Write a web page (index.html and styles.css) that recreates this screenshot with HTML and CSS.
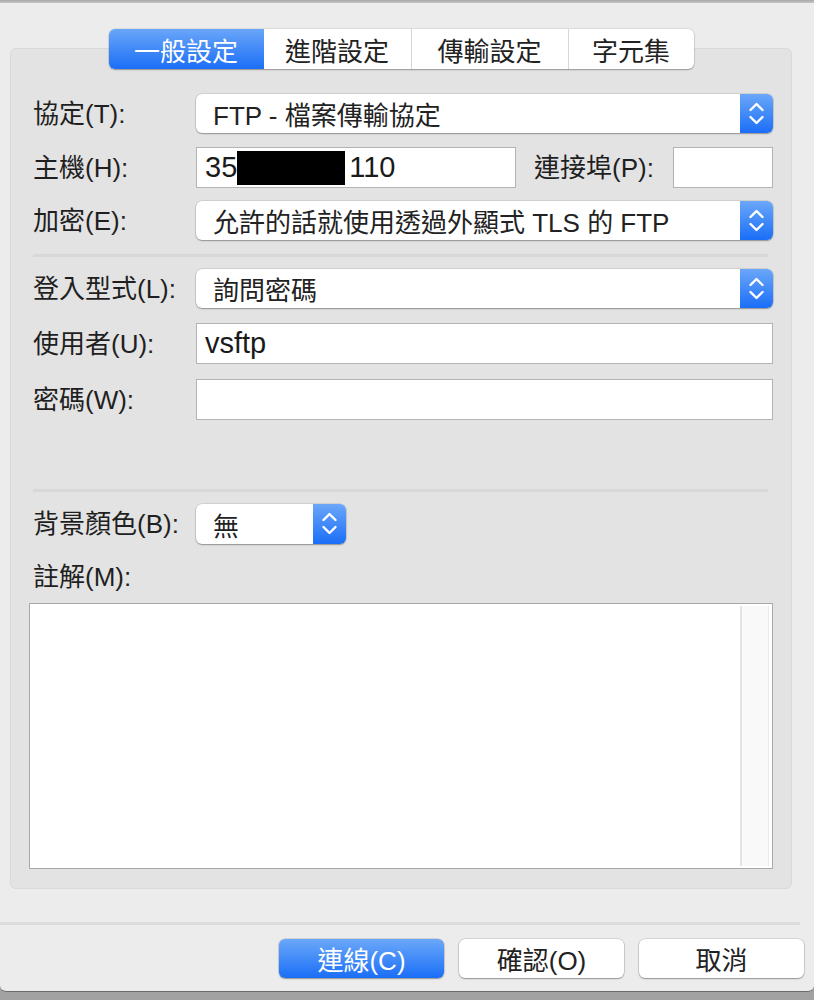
FILE: index.html
```html
<!DOCTYPE html>
<html lang="zh-Hant">
<head>
<meta charset="utf-8">
<title>站台管理員</title>
<link rel="stylesheet" href="styles.css">
</head>
<body>
<div class="topbar"></div>
<div class="window">
  <div class="tabs">
    <div class="tab sel t1">一般設定</div>
    <div class="tab t2">進階設定</div>
    <div class="tab t3">傳輸設定</div>
    <div class="tab t4">字元集</div>
  </div>
  <div class="group">
    <div class="row m14">
      <div class="lbl">協定(T):</div>
      <div class="popup"><span class="val">FTP - 檔案傳輸協定</span><span class="stepper"><svg viewBox="0 0 33 39" width="33" height="39"><polyline points="10.5,16 16.5,10 22.5,16"/><polyline points="10.5,23 16.5,29 22.5,23"/></svg></span></div>
    </div>
    <div class="row m13">
      <div class="lbl">主機(H):</div>
      <div class="hostline">
        <div class="field host">35<span class="redact"></span>110</div>
        <div class="lbl portlbl">連接埠(P):</div>
        <div class="field port"></div>
      </div>
    </div>
    <div class="row m14">
      <div class="lbl">加密(E):</div>
      <div class="popup"><span class="val">允許的話就使用透過外顯式 TLS 的 FTP</span><span class="stepper"><svg viewBox="0 0 33 39" width="33" height="39"><polyline points="10.5,16 16.5,10 22.5,16"/><polyline points="10.5,23 16.5,29 22.5,23"/></svg></span></div>
    </div>
    <div class="sep m12"></div>
    <div class="row m15">
      <div class="lbl">登入型式(L):</div>
      <div class="popup"><span class="val">詢問密碼</span><span class="stepper"><svg viewBox="0 0 33 39" width="33" height="39"><polyline points="10.5,16 16.5,10 22.5,16"/><polyline points="10.5,23 16.5,29 22.5,23"/></svg></span></div>
    </div>
    <div class="row m15">
      <div class="lbl">使用者(U):</div>
      <div class="field">vsftp</div>
    </div>
    <div class="row m69">
      <div class="lbl">密碼(W):</div>
      <div class="field"></div>
    </div>
    <div class="sep m12"></div>
    <div class="row">
      <div class="lbl">背景顏色(B):</div>
      <div class="popup small"><span class="val">無</span><span class="stepper"><svg viewBox="0 0 33 40" width="33" height="40"><polyline points="10.5,16 16.5,10 22.5,16"/><polyline points="10.5,23 16.5,29 22.5,23"/></svg></span></div>
    </div>
    <div class="lbl notelbl">註解(M):</div>
    <div class="notes">
      <div class="notes-main"></div>
      <div class="notes-bar"></div>
    </div>
  </div>
  <div class="bottomsep"></div>
  <div class="buttons">
    <div class="btn primary">連線(C)</div>
    <div class="btn">確認(O)</div>
    <div class="btn">取消</div>
  </div>
</div>
</body>
</html>
```

FILE: styles.css
```css
html, body {
  margin: 0;
  padding: 0;
}
body {
  background: #a2a2a2;
  font-family: "Liberation Sans", "Noto Sans CJK TC", sans-serif;
  font-size: 26px;
  color: #1f1f1f;
  width: 814px;
  height: 1000px;
  overflow: hidden;
}
.topbar {
  height: 3px;
  background: linear-gradient(#a8a8a8, #c6c6c6);
}
.window {
  height: 989px;
  box-sizing: border-box;
  background: #ececec;
  border-bottom: 1px solid #6c6c6c;
  border-radius: 0 0 6px 6px;
  padding-top: 26px;
}
.tabs {
  position: relative;
  z-index: 1;
  display: flex;
  width: 585px;
  height: 40px;
  margin: 0 auto -21px;
  left: -6px;
  background: #fff;
  border-radius: 6px;
  box-shadow: 0 0 0 0.5px rgba(0,0,0,0.12), 0 1px 1.5px rgba(0,0,0,0.3);
  overflow: hidden;
}
.tab {
  display: flex;
  align-items: center;
  justify-content: center;
  height: 40px;
  border-left: 1px solid #d6d6d6;
  box-sizing: border-box;
  color: #222;
}
.tab.sel {
  border-left: none;
  color: #fff;
  background: linear-gradient(#6aa6f9, #1b6ef7);
}
.t1 { width: 155px; }
.t2 { width: 147px; border-left: none; }
.t3 { width: 157px; }
.t4 { width: 126px; }

.group {
  margin: 0 22px 0 10px;
  height: 841px;
  box-sizing: border-box;
  background: #e3e3e3;
  border: 1px solid #d9d9d9;
  border-radius: 6px;
  padding: 45px 18px 18px 18px;
  display: flex;
  flex-direction: column;
}
.row {
  display: grid;
  grid-template-columns: 167px 1fr;
  align-items: center;
}
.m12 { margin-bottom: 12px; }
.m13 { margin-bottom: 13px; }
.m14 { margin-bottom: 14px; }
.m15 { margin-bottom: 15px; }
.m69 { margin-bottom: 69px; }
.lbl {
  padding-left: 4px;
  white-space: nowrap;
  line-height: 30px;
}
.popup {
  display: flex;
  align-items: center;
  height: 39px;
  background: #fff;
  border-radius: 6px;
  box-shadow: 0 0 0 0.5px rgba(0,0,0,0.16), 0 1px 1.5px rgba(0,0,0,0.3);
  overflow: hidden;
}
.popup .val {
  flex: 1;
  padding-left: 17px;
  white-space: nowrap;
  color: #222;
}
.stepper {
  width: 33px;
  height: 100%;
  background: linear-gradient(#6ba7f9, #1a6ef7);
  display: flex;
}
.stepper svg {
  fill: none;
  stroke: #fff;
  stroke-width: 2.4;
  stroke-linecap: round;
  stroke-linejoin: round;
}
.popup.small {
  width: 150px;
  height: 40px;
}
.field {
  height: 41px;
  box-sizing: border-box;
  background: #fff;
  border: 1px solid #b3b3b3;
  padding-left: 8px;
  display: flex;
  align-items: center;
  color: #1a1a1a;
  font-size: 29px;
}
.hostline {
  display: flex;
  align-items: center;
}
.host {
  width: 320px;
}
.redact {
  display: inline-block;
  width: 108px;
  height: 34px;
  background: #000;
  margin-right: 4px;
}
.portlbl {
  padding-left: 0;
  margin-left: 18px;
}
.port {
  width: 100px;
  margin-left: auto;
}
.sep {
  height: 3px;
  background: #d8d8d8;
  margin-left: 4px;
  margin-right: 5px;
}
.notelbl {
  margin-top: 18px;
  margin-bottom: 11px;
}
.notes {
  height: 266px;
  box-sizing: border-box;
  border: 1px solid #a8a8a8;
  background: #fff;
  display: flex;
  padding: 2px 3px 2px 2px;
}
.notes-main {
  flex: 1;
  background: #fff;
}
.notes-bar {
  width: 26px;
  background: #f9f9f9;
  border-left: 2px solid #e4e4e4;
  border-right: 1px solid #ececec;
}
.bottomsep {
  height: 3px;
  width: 800px;
  background: #dddddd;
  margin-top: 33px;
}
.buttons {
  display: flex;
  justify-content: flex-end;
  gap: 15px;
  margin-top: 14px;
  padding-right: 10px;
}
.btn {
  width: 165px;
  height: 39px;
  box-sizing: border-box;
  background: #fff;
  border-radius: 6px;
  box-shadow: 0 0 0 0.5px rgba(0,0,0,0.2), 0 1px 1.5px rgba(0,0,0,0.3);
  display: flex;
  align-items: center;
  justify-content: center;
  color: #222;
}
.btn.primary {
  background: linear-gradient(#6ba8f9, #1a6ef7);
  color: #fff;
}
```
